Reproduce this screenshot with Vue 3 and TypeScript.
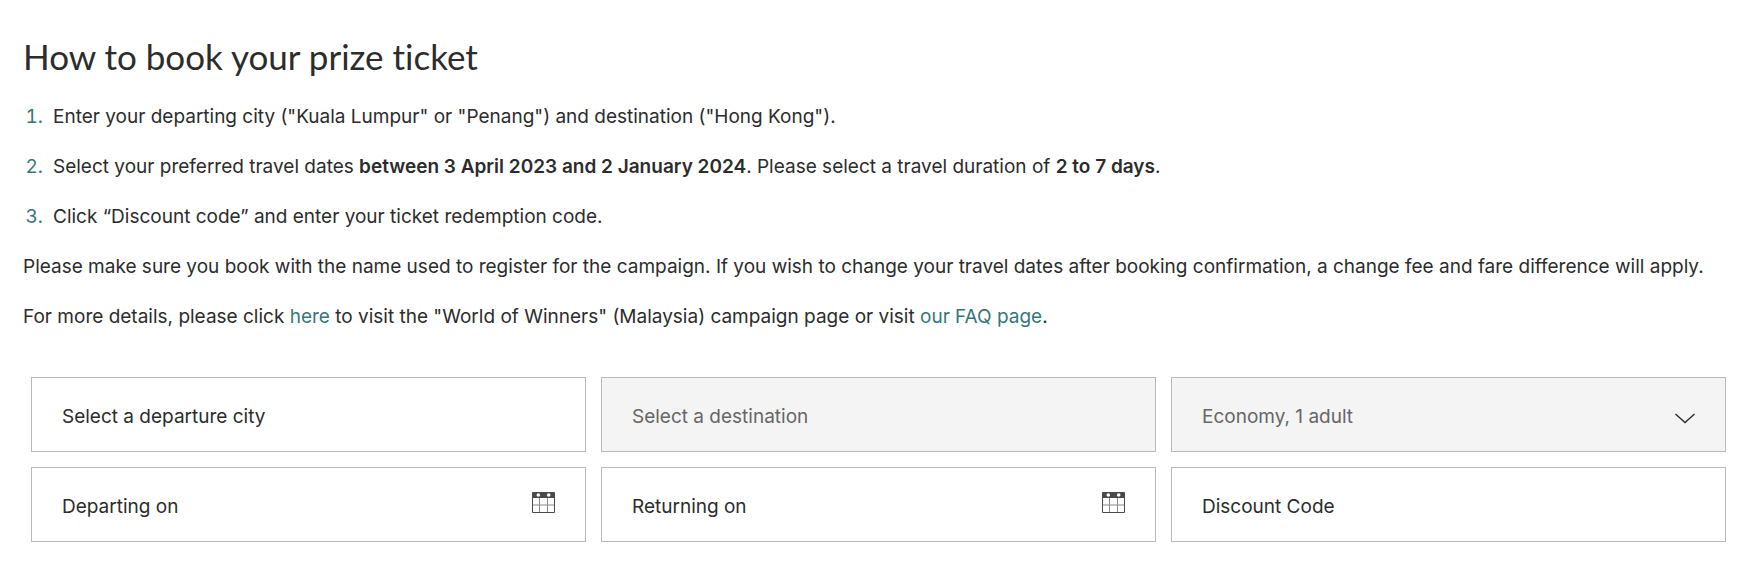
<script setup lang="ts">
import { ref } from 'vue'

const departure = ref('')
const destination = ref('')
const cabin = ref('Economy, 1 adult')
const discountCode = ref('')

interface DateField {
  id: string
  label: string
  value: string
}

const dateFields = ref<DateField[]>([
  { id: 'departing', label: 'Departing on', value: '' },
  { id: 'returning', label: 'Returning on', value: '' },
])
</script>

<template>
  <main class="page">
    <section class="intro">
      <h1>How to book your prize ticket</h1>
      <ol>
        <li>Enter your departing city ("Kuala Lumpur" or "Penang") and destination ("Hong Kong").</li>
        <li>
          Select your preferred travel dates <strong>between 3 April 2023 and 2 January 2024</strong>. Please select a
          travel duration of <strong>2 to 7 days</strong>.
        </li>
        <li>Click “Discount code” and enter your ticket redemption code.</li>
      </ol>
      <p>
        Please make sure you book with the name used to register for the campaign. If you wish to change your travel
        dates after booking confirmation, a change fee and fare difference will apply.
      </p>
      <p>
        For more details, please click <a href="#campaign">here</a> to visit the "World of Winners" (Malaysia) campaign
        page or visit <a href="#faq">our FAQ page</a>.
      </p>
    </section>

    <form class="search" @submit.prevent>
      <div class="field">
        <input v-model="departure" type="text" aria-label="Select a departure city" placeholder="Select a departure city" />
      </div>
      <div class="field muted">
        <input v-model="destination" type="text" aria-label="Select a destination" placeholder="Select a destination" disabled />
      </div>
      <div class="field muted">
        <select v-model="cabin" aria-label="Cabin class and passengers" disabled>
          <option>Economy, 1 adult</option>
        </select>
        <svg class="chevron" viewBox="0 0 20 12" aria-hidden="true">
          <path d="M.5 1 10 9.5 19.5 1" fill="none" stroke="#2c2c2c" stroke-width="1.4" />
        </svg>
      </div>
      <div v-for="date in dateFields" :key="date.id" class="field">
        <input v-model="date.value" type="text" :aria-label="date.label" :placeholder="date.label" />
        <button type="button" class="calendar" :aria-label="`Open calendar: ${date.label}`">
          <svg viewBox="0 0 23 21" aria-hidden="true">
            <path d="M1 0h21a1 1 0 0 1 1 1v5H0V1a1 1 0 0 1 1-1Z" fill="#494a4a" />
            <path d="M.5 5v15.5h22V5" fill="none" stroke="#494a4a" />
            <path d="M7.5 6v14M15.5 6v14M1 13h21" fill="none" stroke="#8a8a8a" />
            <circle cx="6.3" cy="3" r="1.8" fill="#fff" />
            <circle cx="16.7" cy="3" r="1.8" fill="#fff" />
          </svg>
        </button>
      </div>
      <div class="field">
        <input v-model="discountCode" type="text" aria-label="Discount Code" placeholder="Discount Code" />
      </div>
    </form>
  </main>
</template>

<style>
body {
  margin: 0;
  background: #fff;
}
</style>

<style scoped>
.page {
  padding: 33px 15px 38px 23px;
  color: #2c2c2c;
  font-family: Inter, "Liberation Sans", sans-serif;
  font-size: 19px;
  line-height: 30px;
}

h1 {
  margin: 0 0 23px;
  font-family: Lato, Roboto, sans-serif;
  font-size: 35px;
  font-weight: 400;
  font-variant-ligatures: none;
  line-height: 46px;
}

ol {
  margin: 0;
  padding: 0 0 0 25px;
}

li {
  margin: 0 0 20px;
  padding-left: 5px;
}

li::marker {
  color: #367778;
}

strong {
  font-weight: 600;
}

p {
  margin: 0 0 20px;
}

a {
  color: #367778;
  text-decoration: none;
}

.search {
  display: grid;
  grid-template-columns: repeat(3, 1fr);
  gap: 15px;
  margin: 45px 0 0 8px;
}

.field {
  display: flex;
  align-items: center;
  box-sizing: border-box;
  height: 75px;
  padding: 0 30px;
  border: 1px solid #b9b9b9;
  background: #fff;
}

.muted {
  background: #f4f4f4;
  color: #666;
}

input,
select {
  flex: 1;
  min-width: 0;
  height: 100%;
  margin: 0;
  padding: 4px 0 0;
  border: 0;
  outline: 0;
  appearance: none;
  background: transparent;
  color: inherit;
  font: inherit;
  opacity: 1;
}

input::placeholder {
  color: inherit;
  opacity: 1;
}

.chevron {
  width: 20px;
  height: 12px;
  margin-top: 8px;
}

.calendar {
  display: flex;
  margin: 0 0 4px;
  padding: 0;
  border: 0;
  background: none;
  cursor: pointer;
}

.calendar svg {
  width: 23px;
  height: 21px;
}
</style>
